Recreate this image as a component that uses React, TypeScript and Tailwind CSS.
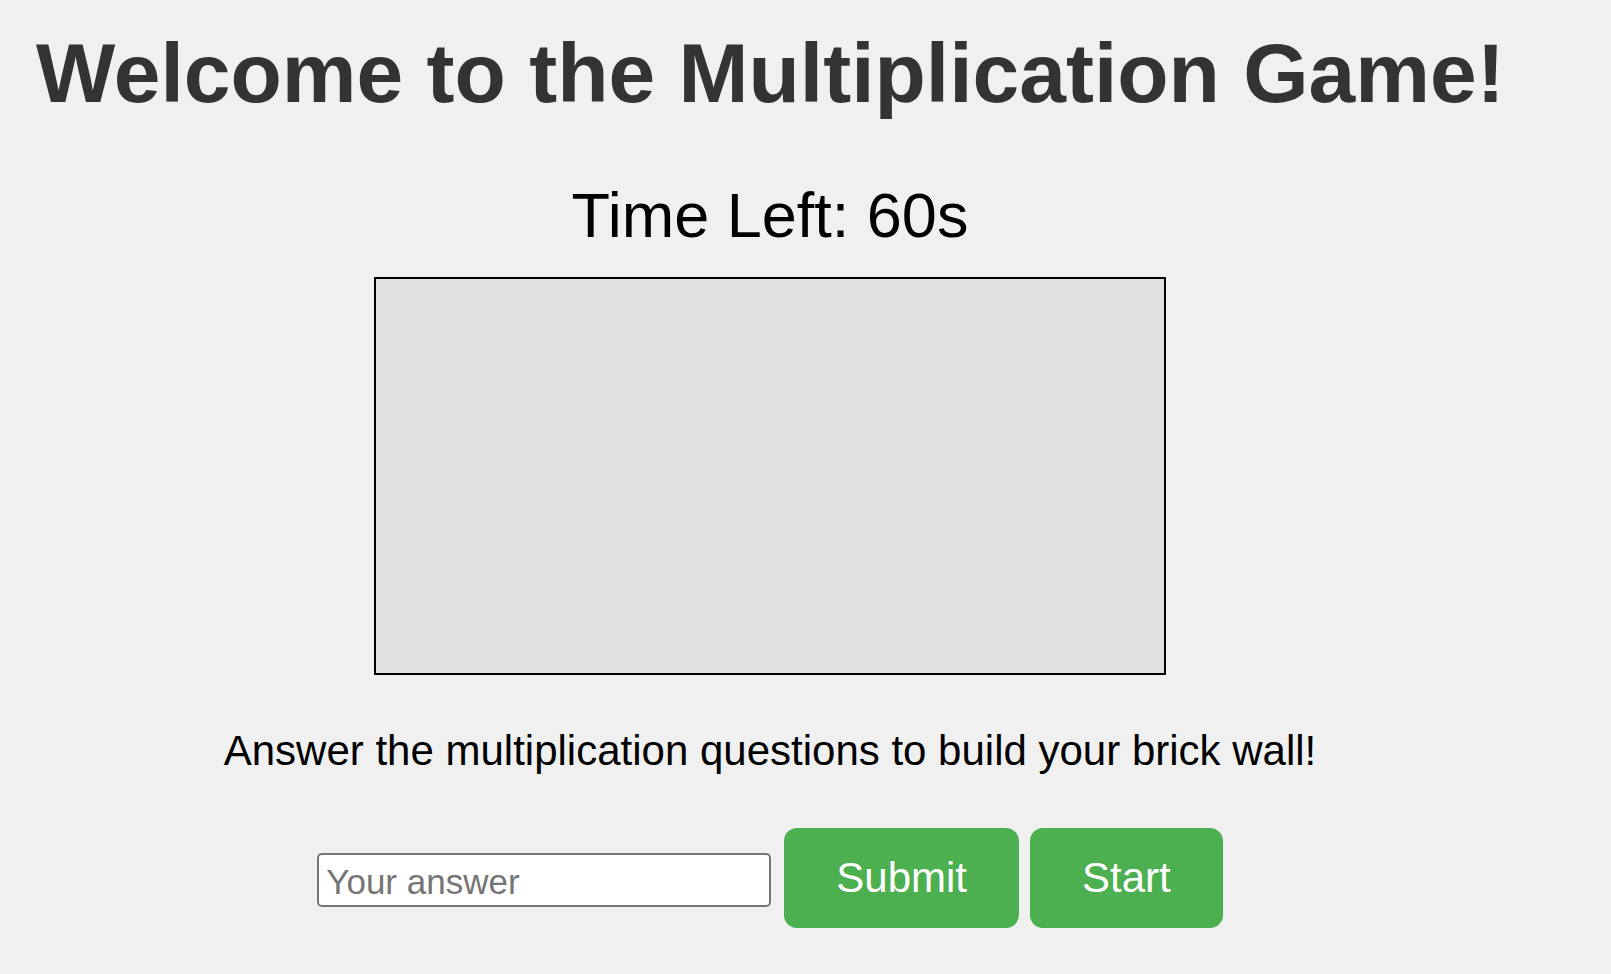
import React, { useState } from 'react';

export default function App() {
  const [answer, setAnswer] = useState('');

  return (
    <div className="min-h-[974px] w-full bg-[#f0f0f0] font-['Liberation_Sans',Arial,sans-serif]">
      <div className="flex w-[1540px] flex-col items-center pt-[25px]">
        <h1 className="w-full pl-[36px] text-left text-[84px] font-bold leading-[96px] text-[#333333]">
          Welcome to the Multiplication Game!
        </h1>

        <div className="mt-[60px] text-[63px] leading-[69px] text-black">Time Left: 60s</div>

        {/* brick wall canvas */}
        <div className="mt-[27px] h-[398px] w-[792px] border-2 border-black bg-[#e0e0e0]" />

        <p className="mt-[52px] text-[42px] leading-[48px] text-black">
          Answer the multiplication questions to build your brick wall!
        </p>

        <div className="mt-[53px] flex items-center">
          <input
            type="text"
            value={answer}
            onChange={(e) => setAnswer(e.target.value)}
            placeholder="Your answer"
            className="mt-[3px] h-[54px] w-[454px] rounded-[5px] border-2 border-[#767676] bg-white px-[7px] pt-[4px] text-[35px] text-black outline-none placeholder:text-[#757575]"
          />
          <button className="ml-[13px] h-[100px] rounded-[13px] bg-[#4caf50] px-[52px] text-[42px] leading-[48px] text-white">
            Submit
          </button>
          <button className="ml-[11px] h-[100px] rounded-[13px] bg-[#4caf50] px-[52px] text-[42px] leading-[48px] text-white">
            Start
          </button>
        </div>
      </div>
    </div>
  );
}
